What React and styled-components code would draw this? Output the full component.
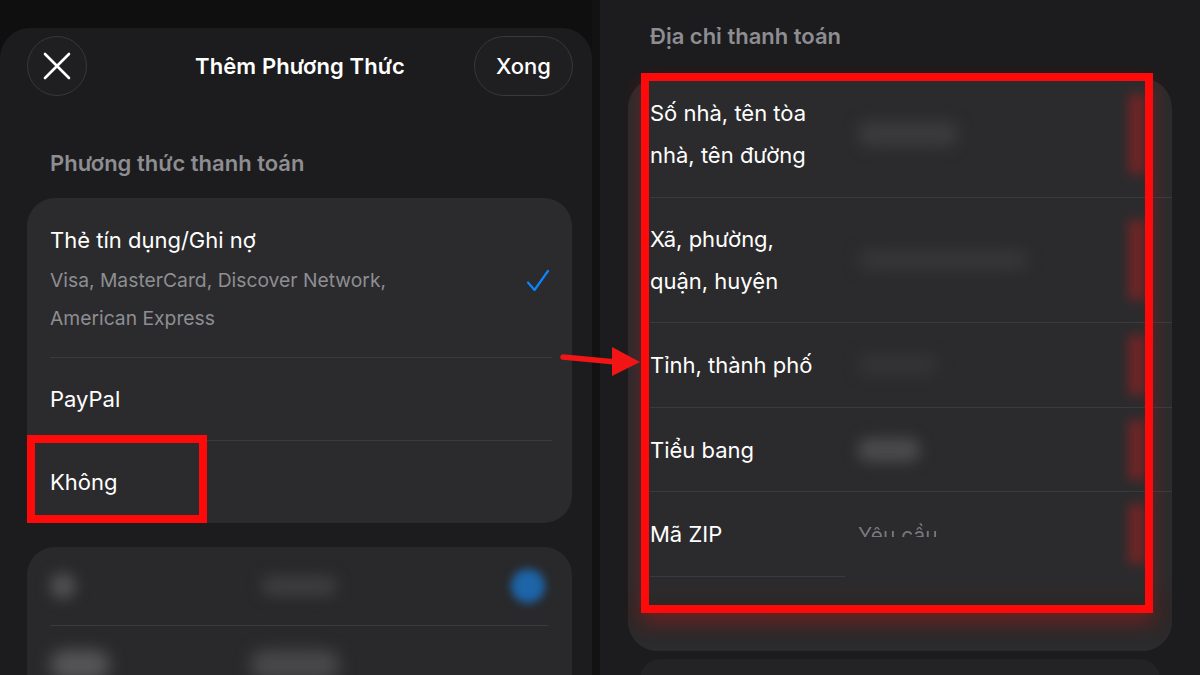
import React from "react";
import styled, { createGlobalStyle } from "styled-components";

const GlobalStyle = createGlobalStyle`
  html, body {
    margin: 0;
    padding: 0;
    background: #121213;
  }
  body {
    font-family: "Inter", "Noto Sans", "Liberation Sans", sans-serif;
    -webkit-font-smoothing: antialiased;
  }
`;

const Page = styled.div`
  position: relative;
  width: 1200px;
  height: 675px;
  overflow: hidden;
  display: grid;
  grid-template-columns: 592px 600px;
  column-gap: 8px;
  background: #121213;
`;

/* ---------- left: payment method sheet ---------- */

const LeftPane = styled.div`
  padding-top: 28px;
  background: #0f0f10;
`;

const Sheet = styled.div`
  height: 100%;
  background: #1c1c1e;
  border-radius: 30px 30px 0 0;
  display: flex;
  flex-direction: column;
`;

const Header = styled.div`
  display: grid;
  grid-template-columns: 1fr auto 1fr;
  align-items: center;
  padding: 8px 19px 0 27px;
`;

const CircleButton = styled.button`
  width: 60px;
  height: 60px;
  border-radius: 50%;
  background: #1f1f21;
  border: 1.5px solid #38383b;
  display: flex;
  align-items: center;
  justify-content: center;
  padding: 0;
  justify-self: start;
`;

const PillButton = styled.button`
  height: 60px;
  width: 99px;
  border-radius: 30px;
  background: #1f1f21;
  border: 1.5px solid #38383b;
  color: #fff;
  font-family: inherit;
  font-size: 22px;
  font-weight: 500;
  justify-self: end;
`;

const Title = styled.h1`
  margin: 0;
  color: #fff;
  font-size: 22px;
  font-weight: 600;
  letter-spacing: 0.1px;
`;

const SectionLabel = styled.div`
  color: #8d8d92;
  font-size: 22px;
  font-weight: 600;
  line-height: 26px;
  padding-left: ${(p) => p.$inset || 50}px;
  margin-top: ${(p) => p.$top || 0}px;
`;

const Card = styled.div`
  background: #2b2b2d;
  border-radius: 28px;
  margin: ${(p) => p.$margin};
  overflow: hidden;
`;

const MethodRow = styled.div`
  display: flex;
  align-items: center;
  justify-content: space-between;
  height: ${(p) => p.$h}px;
  padding: ${(p) => p.$pt || 0}px 22px 0 23px;
  box-sizing: border-box;
`;

const MethodTitle = styled.div`
  color: #fff;
  font-size: 22px;
  line-height: 30px;
`;

const MethodSub = styled.div`
  color: #8e8e93;
  font-size: 19.3px;
  line-height: 38px;
  margin-top: 6px;
`;

const Divider = styled.div`
  height: 1px;
  background: #3b3b3e;
  margin: ${(p) => p.$margin || "0 20px 0 23px"};
  width: ${(p) => (p.$w ? `${p.$w}px` : "auto")};
`;

const BlurCard = styled.div`
  margin: 24px 20px 0 27px;
  height: 160px;
  background: #29292b;
  border-radius: 28px 28px 0 0;
  padding: 0 24px 0 23px;
`;

const BlurRow = styled.div`
  display: flex;
  align-items: center;
  height: 78px;
`;

const Blob = styled.div`
  width: ${(p) => p.$w}px;
  height: ${(p) => p.$h}px;
  margin-left: ${(p) => p.$ml || 0}px;
  border-radius: ${(p) => p.$r || 10}px;
  background: ${(p) => p.$c};
  filter: blur(${(p) => p.$blur || 7}px);
  flex-shrink: 0;
`;

/* ---------- right: billing address ---------- */

const RightPane = styled.div`
  background: #1c1c1e;
  padding-top: 23px;
  display: flex;
  flex-direction: column;
`;

const AddressCard = styled(Card)`
  margin: 29px 28px 0 28px;
  border-radius: 30px;
`;

const FieldRow = styled.div`
  display: grid;
  grid-template-columns: 208px 1fr 22px;
  align-items: center;
  height: ${(p) => p.$h}px;
  padding: 0 27px ${(p) => p.$pb || 0}px 22px;
  box-sizing: border-box;
`;

const FieldLabel = styled.div`
  color: #fff;
  font-size: 22px;
  line-height: 42px;
`;

const FieldValue = styled.div`
  display: flex;
  align-items: center;
`;

const Placeholder = styled.div`
  color: #77777c;
  font-size: 21px;
  line-height: 26px;
  height: 14px;
  overflow: hidden;
  margin-top: -8px;
  filter: blur(0.6px);
`;

const Smear = styled.div`
  width: 16px;
  height: ${(p) => p.$h || 64}px;
  background: rgba(190, 30, 30, 0.5);
  filter: blur(6px);
  justify-self: end;
`;

const CardTail = styled.div`
  height: 74px;
  background: linear-gradient(180deg, #2b2b2d 0%, #2d2727 45%, #2b2b2d 100%);
`;

const PeekCard = styled.div`
  margin: 8px 40px 0 40px;
  height: 40px;
  border-radius: 20px 20px 0 0;
  background: #232325;
`;

/* ---------- annotations ---------- */

const RedBox = styled.div`
  position: absolute;
  left: ${(p) => p.$x}px;
  top: ${(p) => p.$y}px;
  width: ${(p) => p.$w}px;
  height: ${(p) => p.$h}px;
  border: 8px solid #ff0a0a;
  box-sizing: border-box;
  box-shadow: ${(p) => (p.$glow ? "0 10px 18px rgba(255, 20, 20, 0.28)" : "none")};
  pointer-events: none;
`;

const ArrowSvg = styled.svg`
  position: absolute;
  left: 556px;
  top: 340px;
  overflow: visible;
`;

const CloseIcon = () => (
  <svg width="28" height="28" viewBox="0 0 28 28">
    <path d="M2 2 L26 26 M26 2 L2 26" stroke="#fff" strokeWidth="2.6" strokeLinecap="round" />
  </svg>
);

const Check = () => (
  <svg width="24" height="24" viewBox="0 0 24 24">
    <path d="M2 13.5 L8.5 21 L22 2" fill="none" stroke="#0a84ff" strokeWidth="2.2" strokeLinecap="round" strokeLinejoin="round" />
  </svg>
);

const addressFields = [
  { label: ["Số nhà, tên tòa", "nhà, tên đường"], h: 119, pb: 8, blob: { w: 100, h: 26, c: "#3a3a3c" } },
  { label: ["Xã, phường,", "quận, huyện"], h: 124, blob: { w: 170, h: 22, c: "#353537" } },
  { label: ["Tỉnh, thành phố"], h: 84, blob: { w: 80, h: 22, c: "#333335" } },
  { label: ["Tiểu bang"], h: 83, blob: { w: 62, h: 24, c: "#4a4a4c" } },
  { label: ["Mã ZIP"], h: 84, placeholder: "Yêu cầu" },
];

export default function App() {
  return (
    <>
      <GlobalStyle />
      <Page>
        <LeftPane>
          <Sheet>
            <Header>
              <CircleButton aria-label="close">
                <CloseIcon />
              </CircleButton>
              <Title>Thêm Phương Thức</Title>
              <PillButton>Xong</PillButton>
            </Header>

            <SectionLabel $top={54}>Phương thức thanh toán</SectionLabel>

            <Card $margin="22px 20px 0 27px">
              <MethodRow $h={159} $pt={6}>
                <div>
                  <MethodTitle>Thẻ tín dụng/Ghi nợ</MethodTitle>
                  <MethodSub>
                    Visa, MasterCard, Discover Network,
                    <br />
                    American Express
                  </MethodSub>
                </div>
                <Check />
              </MethodRow>
              <Divider />
              <MethodRow $h={82}>
                <MethodTitle>PayPal</MethodTitle>
              </MethodRow>
              <Divider />
              <MethodRow $h={82}>
                <MethodTitle>Không</MethodTitle>
              </MethodRow>
            </Card>

            <BlurCard>
              <BlurRow>
                <Blob $w={26} $h={26} $r={13} $c="#505052" />
                <Blob $w={76} $h={20} $ml={185} $c="#3d3d3f" />
                <Blob $w={34} $h={34} $r={17} $ml={174} $c="#1d64a8" $blur={4} />
              </BlurRow>
              <Divider $margin="0" />
              <BlurRow>
                <Blob $w={60} $h={30} $r={15} $c="#555557" $blur={8} />
                <Blob $w={90} $h={30} $r={15} $ml={140} $c="#48484a" $blur={8} />
              </BlurRow>
            </BlurCard>
          </Sheet>
        </LeftPane>

        <RightPane>
          <SectionLabel $inset={50}>Địa chỉ thanh toán</SectionLabel>
          <AddressCard>
            {addressFields.map((f, idx) => (
              <React.Fragment key={idx}>
                {idx > 0 && <Divider $margin="0 0 0 22px" />}
                <FieldRow $h={f.h} $pb={f.pb}>
                  <FieldLabel>
                    {f.label.map((line) => (
                      <div key={line}>{line}</div>
                    ))}
                  </FieldLabel>
                  <FieldValue>
                    {f.placeholder ? (
                      <Placeholder>{f.placeholder}</Placeholder>
                    ) : (
                      <Blob $w={f.blob.w} $h={f.blob.h} $c={f.blob.c} />
                    )}
                  </FieldValue>
                  <Smear $h={f.h > 100 ? 80 : 60} />
                </FieldRow>
              </React.Fragment>
            ))}
            <Divider $margin="0 0 0 22px" $w={195} />
            <CardTail />
          </AddressCard>
          <PeekCard />
        </RightPane>

        <RedBox $x={27} $y={435} $w={180} $h={88} />
        <RedBox $x={641} $y={73} $w={512} $h={540} $glow />

        <ArrowSvg width="90" height="50" viewBox="0 0 90 50">
          <path d="M7 17 L60 22" stroke="#f21515" strokeWidth="5.5" strokeLinecap="round" />
          <path d="M56 7 L84 22 L56 36 Z" fill="#f21515" />
        </ArrowSvg>
      </Page>
    </>
  );
}
